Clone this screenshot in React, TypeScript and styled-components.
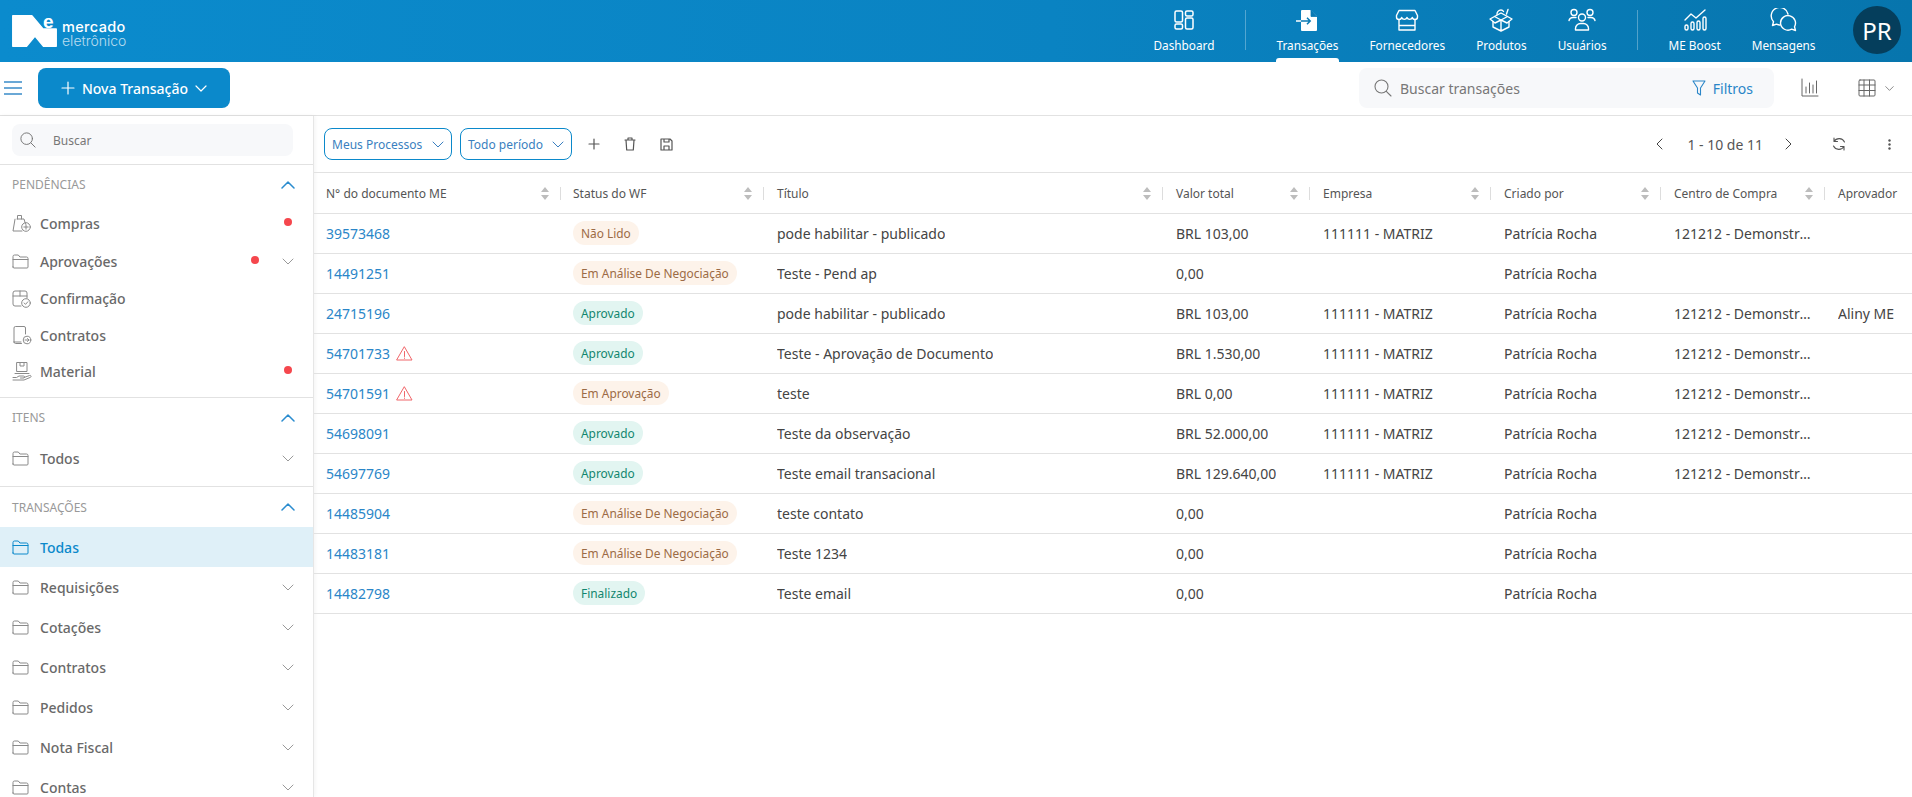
import React from "react";
import styled, { createGlobalStyle } from "styled-components";

const Global = createGlobalStyle`
  html, body { margin: 0; padding: 0; height: 100%; overflow: hidden; background: #fff; }
  body { font-family: "Noto Sans", "Open Sans", sans-serif; color: #444; }
  * { box-sizing: border-box; }
`;

const Page = styled.div`display:flex;flex-direction:column;height:797px;width:1912px;overflow:hidden;`;

/* Header */
const Header = styled.header`
  height:62px;flex:none;display:flex;justify-content:space-between;align-items:stretch;
  background:linear-gradient(90deg,#0b8bcd 0%,#0a83c2 55%,#0775ad 100%);color:#fff;
`;
const Logo = styled.div`display:flex;align-items:center;padding-left:12px;gap:5px;`;
const LogoMark = styled.div`position:relative;width:45px;height:32px;display:flex;`;
const LogoE = styled.span`
  position:absolute;left:31px;top:-3px;font-family:"Liberation Sans",sans-serif;font-size:19px;font-weight:700;line-height:19px;color:#fff;
`;
const LogoText = styled.div`display:flex;flex-direction:column;margin-top:4px;`;
const LogoTop = styled.span`font-family:"Inter",sans-serif;font-size:14.500px;font-weight:500;line-height:15px;letter-spacing:.35px;`;
const LogoBottom = styled.span`font-family:"Inter",sans-serif;font-size:14px;font-weight:300;line-height:13px;opacity:.7;`;
const Nav = styled.nav`display:flex;align-items:stretch;padding-right:11px;`;
const NavItem = styled.div<{ $active?: boolean }>`
  position:relative;display:flex;flex-direction:column;align-items:center;padding:0 15.500px;font-size:11.800px;line-height:16px;
  &::after{content:"";display:${(p) => (p.$active ? "block" : "none")};position:absolute;left:15px;right:15px;bottom:0;height:4px;background:#fff;border-radius:3px 3px 0 0;}
`;
const NavIconBox = styled.div`height:24px;margin-top:8px;margin-bottom:5px;display:flex;align-items:center;justify-content:center;`;
const NavDivider = styled.div`width:1px;height:40px;margin:10px 15px 0;background:rgba(255,255,255,.3);`;
const Avatar = styled.div`width:48px;height:48px;border-radius:50%;background:#053e5c;color:#fff;font-size:24px;display:flex;align-items:center;justify-content:center;margin:6px 0 0 22px;`;

/* Toolbar */
const Toolbar = styled.div`height:54px;flex:none;display:flex;align-items:center;border-bottom:1px solid #e2e2e2;padding:0 18px 1px 4px;background:#fff;`;
const Burger = styled.div`color:#3a8cc9;display:flex;`;
const NewButton = styled.button`
  margin-left:16px;width:192px;height:40px;border:0;border-radius:8px;background:#0b89cb;color:#fff;display:flex;align-items:center;justify-content:center;gap:7px;
  font-family:inherit;font-size:14px;font-weight:500;
`;
const Spacer = styled.div`flex:1;`;
const SearchBox = styled.div`width:415px;height:40px;border-radius:8px;background:#f7f8fa;display:flex;align-items:center;padding:0 21px 0 15px;gap:8px;color:#777;font-size:14px;`;
const SearchHint = styled.span`flex:1;`;
const FilterLink = styled.span`display:flex;align-items:center;gap:7px;color:#2a86c8;font-weight:400;`;
const ToolIcon = styled.div<{ $ml: number }>`display:flex;align-items:center;color:#666;margin-left:${(p) => p.$ml}px;`;

/* Main */
const Main = styled.div`flex:1;display:flex;min-height:0;`;
const Sidebar = styled.aside`width:314px;flex:none;border-right:1px solid #e6e6e6;box-shadow:1px 0 4px rgba(0,0,0,.05);overflow:hidden;background:#fff;`;
const SideSearchWrap = styled.div`padding:8px 20px 8px 12px;height:49px;border-bottom:1px solid #e2e2e2;`;
const SideSearch = styled.div`height:32px;border-radius:8px;background:#f7f8fa;display:flex;align-items:center;padding-left:8px;gap:17px;color:#777;font-size:12px;`;
const Section = styled.section<{ $last?: boolean; $pb?: number }>`border-bottom:${(p) => (p.$last ? "0" : "1px solid #e2e2e2")};padding-bottom:${(p) => p.$pb ?? 0}px;`;
const SectionHead = styled.div<{ $h?: number }>`height:${(p) => p.$h ?? 39}px;display:flex;align-items:center;justify-content:space-between;padding:0 18px 0 12px;font-size:12px;color:#999;`;
const SectionChev = styled.span`color:#2a8ccf;display:flex;`;
const SideItem = styled.div<{ $h: number; $active?: boolean }>`
  height:${(p) => p.$h}px;display:flex;align-items:center;padding:0 19px 0 12px;font-size:14px;font-weight:500;
  color:${(p) => (p.$active ? "#0b89cb" : "#696969")};background:${(p) => (p.$active ? "#dff0f8" : "transparent")};
`;
const SideIcon = styled.span<{ $active?: boolean }>`width:28px;flex:none;display:flex;align-items:center;color:${(p) => (p.$active ? "#0b89cb" : "#8a8a8a")};`;
const SideLabel = styled.span`flex:1;`;
const Dot = styled.i<{ $mr?: number }>`width:8px;height:8px;border-radius:50%;background:#f5474d;display:block;margin-top:-2px;margin-right:${(p) => p.$mr ?? 2}px;`;
const ChevSlot = styled.span`color:#999;display:flex;`;

/* Content */
const Content = styled.main`flex:1;min-width:0;display:flex;flex-direction:column;`;
const FilterBar = styled.div`height:57px;flex:none;display:flex;align-items:center;padding:0 5px 0 10px;border-bottom:1px solid #e2e2e2;`;
const Pill = styled.div<{ $w: number }>`
  width:${(p) => p.$w}px;height:32px;margin-right:8px;border:1px solid #0b89cb;border-radius:8px;display:flex;align-items:center;justify-content:space-between;padding:0 7px 0 7px;font-size:12px;color:#3a7fc0;
`;
const BarIcon = styled.span<{ $ml?: number }>`width:36px;display:flex;justify-content:center;color:#555;margin-left:${(p) => p.$ml ?? 0}px;`;
const Pager = styled.span`font-size:14px;color:#555;margin:0 22px 0 24px;`;
const Grid = "246px 203px 399px 147px 181px 170px 164px 88px";
const HeadRow = styled.div`height:41px;flex:none;display:grid;grid-template-columns:${Grid};border-bottom:1px solid #e2e2e2;`;
const HeadCell = styled.div`display:flex;align-items:center;font-size:12px;color:#555;padding-right:11px;min-width:0;`;
const Sep = styled.i<{ $mr: number }>`width:1px;height:13px;background:#ddd;margin-right:${(p) => p.$mr}px;flex:none;`;
const FirstPad = styled.i`width:12px;flex:none;`;
const HeadLabel = styled.span`flex:1;white-space:nowrap;`;
const Row = styled.div`height:40px;flex:none;display:grid;grid-template-columns:${Grid};border-bottom:1px solid #e2e2e2;`;
const Cell = styled.div<{ $pl?: number }>`
  display:flex;align-items:center;padding:0 12px 0 ${(p) => p.$pl ?? 14}px;font-size:14px;color:#444;min-width:0;white-space:nowrap;
`;
const Clip = styled.span`overflow:hidden;text-overflow:ellipsis;white-space:nowrap;`;
const DocLink = styled.a`color:#2a86c8;text-decoration:none;`;
const Warn = styled.span`display:flex;margin-left:6px;color:#f0666a;`;
const Badge = styled.span<{ $tone: "orange" | "green" }>`
  height:24px;border-radius:12px;padding:0 8px;display:inline-flex;align-items:center;font-size:11.900px;margin-top:-1px;
  background:${(p) => (p.$tone === "orange" ? "#fdf3ea" : "#e2f5f1")};color:${(p) => (p.$tone === "orange" ? "#9c6b45" : "#11866e")};
`;

/* Icons */
type SP = { children: React.ReactNode; w?: number; h?: number; vb?: string; sw?: number };
const I = ({ children, w = 20, h = 20, vb, sw = 1.3 }: SP) => (
  <svg width={w} height={h} viewBox={vb ?? `0 0 ${w} ${h}`} fill="none" stroke="currentColor" strokeWidth={sw} strokeLinecap="round" strokeLinejoin="round">{children}</svg>
);
const ChevDown = ({ w = 12 }: { w?: number }) => <I w={w} h={7} vb="0 0 12 7" sw={1}><path d="M1 1l5 5 5-5" /></I>;
const ChevUp = () => <I w={14} h={8} vb="0 0 14 8" sw={1.5}><path d="M1 7l6-6 6 6" /></I>;
const Folder = () => <I w={17} h={15} vb="0 0 17 15" sw={1}><path d="M1 13V2.500A1.500 1.500 0 012.500 1h3.800l1.600 2h6.600A1.500 1.500 0 0116 4.500v8.500a1 1 0 01-1 1H2a1 1 0 01-1-1zM1 5.500h15" /></I>;
const Search = ({ s = 18 }: { s?: number }) => <I w={s} h={s} vb="0 0 18 18" sw={1.1}><circle cx="7.500" cy="7.500" r="6.500" /><path d="M12.300 12.300L17 17" /></I>;
const Bag = () => <I w={20} h={20} sw={1}><path d="M5 6h7l1.500 5M3 6.200L1 18h9M5.500 6V2.500h4V6" /><circle cx="14" cy="14" r="4.300" /><path d="M14 11.800v4.400M11.800 14h4.400" /></I>;
const Confirm = () => <I w={20} h={20} sw={1}><path d="M9 17H3a2 2 0 01-2-2V4a2 2 0 012-2h10a2 2 0 012 2v5M1 7h14M8 2v5" /><circle cx="14" cy="14" r="4.300" /><path d="M12.200 14l1.300 1.400 2.300-2.600" /></I>;
const Contract = () => <I w={20} h={20} sw={1}><path d="M2 17V3a1.500 1.500 0 011.500-1.500H12A1.500 1.500 0 0113.500 3v6M2 17a1.500 1.500 0 001.500 1.500H9.500M2 17h7" /><circle cx="15" cy="15" r="3.800" /><path d="M13 15h4M15.500 13.500L17 15l-1.500 1.500" /></I>;
const Material = () => <I w={20} h={20} sw={1}><path d="M5 1.500h10v9H5zM8 1.500v3.500h4V1.500M3 12.500h14" /><path d="M1 16.500h3.500l2.500-1.500h4.500a1 1 0 010 2H8.500M12 16.500l5.500-2a1 1 0 011 1.800L12 19H1" /></I>;
const Warning = () => <I w={17} h={15} vb="0 0 17 15" sw={1}><path d="M8.500 1L16 14H1zM8.500 5.500v5M8.500 12v.4" /></I>;
const Sort = () => <svg width="8" height="13" viewBox="0 0 8 13" fill="#bdbdbd"><path d="M4 0l4 5H0zM4 13L0 8h8z" /></svg>;

const NavIcons = {
  dash: <I w={20} h={20} sw={1.5}><rect x="1" y="1" width="7.500" height="11" rx="1.500" /><rect x="1" y="14" width="7.500" height="5" rx="1.500" /><rect x="11.500" y="1" width="7.500" height="5" rx="1.500" /><rect x="11.500" y="8" width="7.500" height="11" rx="1.500" /></I>,
  trans: <svg width="24" height="24" viewBox="0 0 24 24"><path d="M6 3a1 1 0 011-1h8.500L22 8.500V22a1 1 0 01-1 1H7a1 1 0 01-1-1z" fill="#fff" /><path d="M16 2v6.500h6" fill="#0a7ab4" stroke="#0a7ab4" strokeWidth=".8" /><path d="M1 13h5" stroke="#fff" strokeWidth="1.500" /><path d="M6 13h9M12 9.800l3.200 3.200-3.200 3.200" stroke="#0a7ab4" strokeWidth="1.500" fill="none" /></svg>,
  store: <I w={24} h={24} sw={1.4}><path d="M4 2.500h16l2.500 5v1.500a2.500 2.500 0 01-2.500 2.500 2.700 2.700 0 01-2.700-2 2.800 2.800 0 01-5.300 0 2.800 2.800 0 01-5.300 0 2.700 2.700 0 01-2.700 2A2.500 2.500 0 011.500 9V7.500z" /><path d="M4 12v10h16V12M4 17.500h16" /></I>,
  box: <I w={26} h={24} sw={1.4}><path d="M6.500 8.500L13 5l6.500 3.500L13 12zM6.500 8.500L2 11l5 4 6-3 6 3 5-4-4.500-2.500" /><path d="M5 13.500V19l8 4 8-4v-5.500M13 12v11" /><path d="M9 6.500A4 4 0 0113 2a3 3 0 012.500 1.500M18.500 6L20 1.500" /></I>,
  users: <I w={28} h={24} sw={1.4}><circle cx="14" cy="9.500" r="3.500" /><path d="M7.500 22v-1.500a5 5 0 015-5h3a5 5 0 015 5V22z" /><circle cx="6" cy="4.500" r="3" /><circle cx="22" cy="4.500" r="3" /><path d="M1 12.500c.5-2 2-3 4-3h3M27 12.500c-.5-2-2-3-4-3h-3" /></I>,
  boost: <I w={24} h={22} sw={1.4}><path d="M2 11l6-6 5 4 9-8" /><rect x="2" y="16" width="3" height="5" rx="1.500" /><rect x="8" y="13" width="3" height="8" rx="1.500" /><rect x="14" y="12" width="3" height="9" rx="1.500" /><rect x="20" y="8" width="3" height="13" rx="1.500" /></I>,
  msg: <I w={28} h={24} sw={1.4}><path d="M10 17a9 9 0 01-3.500-.9L2.500 17.500l1-3.800A8.500 8.500 0 1118 6" /><path d="M10.500 15a7.500 7.500 0 1114 3.800l1 3.700-3.800-1.300A7.500 7.500 0 0110.500 15z" /></I>,
};

const navA = [{ k: "dash", t: "Dashboard" }];
const navB = [{ k: "trans", t: "Transações", a: true }, { k: "store", t: "Fornecedores" }, { k: "box", t: "Produtos" }, { k: "users", t: "Usuários" }];
const navC = [{ k: "boost", t: "ME Boost" }, { k: "msg", t: "Mensagens" }];
type N = { k: string; t: string; a?: boolean };
const NavGroup = ({ items }: { items: N[] }) => (
  <>
    {items.map((n) => (
      <NavItem key={n.t} $active={n.a}>
        <NavIconBox>{NavIcons[n.k as keyof typeof NavIcons]}</NavIconBox>
        {n.t}
      </NavItem>
    ))}
  </>
);

const columns = ["N° do documento ME", "Status do WF", "Título", "Valor total", "Empresa", "Criado por", "Centro de Compra", "Aprovador"];
const M = "111111 - MATRIZ";
const P = "Patrícia Rocha";
const C = "121212 - Demonstração";
type R = { id: string; warn?: boolean; st: string; tone: "orange" | "green"; title: string; val: string; emp?: string; cc?: string; ap?: string };
const rows: R[] = [
  { id: "39573468", st: "Não Lido", tone: "orange", title: "pode habilitar - publicado", val: "BRL 103,00", emp: M, cc: C },
  { id: "14491251", st: "Em Análise De Negociação", tone: "orange", title: "Teste - Pend ap", val: "0,00" },
  { id: "24715196", st: "Aprovado", tone: "green", title: "pode habilitar - publicado", val: "BRL 103,00", emp: M, cc: C, ap: "Aliny ME" },
  { id: "54701733", warn: true, st: "Aprovado", tone: "green", title: "Teste - Aprovação de Documento", val: "BRL 1.530,00", emp: M, cc: C },
  { id: "54701591", warn: true, st: "Em Aprovação", tone: "orange", title: "teste", val: "BRL 0,00", emp: M, cc: C },
  { id: "54698091", st: "Aprovado", tone: "green", title: "Teste da observação", val: "BRL 52.000,00", emp: M, cc: C },
  { id: "54697769", st: "Aprovado", tone: "green", title: "Teste email transacional", val: "BRL 129.640,00", emp: M, cc: C },
  { id: "14485904", st: "Em Análise De Negociação", tone: "orange", title: "teste contato", val: "0,00" },
  { id: "14483181", st: "Em Análise De Negociação", tone: "orange", title: "Teste 1234", val: "0,00" },
  { id: "14482798", st: "Finalizado", tone: "green", title: "Teste email", val: "0,00" },
];

const SideRow = ({ h, icon, label, dot, chev, active, dotMr }: { h: number; icon: React.ReactNode; label: string; dot?: boolean; chev?: boolean; active?: boolean; dotMr?: number }) => (
  <SideItem $h={h} $active={active}>
    <SideIcon $active={active}>{icon}</SideIcon>
    <SideLabel>{label}</SideLabel>
    {dot && <Dot $mr={dotMr} />}
    {chev && <ChevSlot><ChevDown /></ChevSlot>}
  </SideItem>
);

export default function App() {
  return (
    <Page>
      <Global />
      <Header>
        <Logo>
          <LogoMark>
            <svg width="45" height="32" viewBox="0 0 45 32" fill="#fff" stroke="#fff" strokeWidth="1.500" strokeLinejoin="round"><path d="M.8 .8h19L31 14h13.200v17.200H31.500L23 21l-8.500 10.200H.8z" /></svg>
            <LogoE>e</LogoE>
          </LogoMark>
          <LogoText>
            <LogoTop>mercado</LogoTop>
            <LogoBottom>eletrônico</LogoBottom>
          </LogoText>
        </Logo>
        <Nav>
          <NavGroup items={navA} />
          <NavDivider />
          <NavGroup items={navB} />
          <NavDivider />
          <NavGroup items={navC} />
          <Avatar>PR</Avatar>
        </Nav>
      </Header>

      <Toolbar>
        <Burger><I w={18} h={16} sw={1.500}><path d="M0 2h18M0 8h18M0 14h18" /></I></Burger>
        <NewButton>
          <I w={14} h={14} sw={1.200}><path d="M7 1v12M1 7h12" /></I>
          Nova Transação
          <I w={12} h={7} vb="0 0 12 7" sw={1.200}><path d="M1 1l5 5 5-5" /></I>
        </NewButton>
        <Spacer />
        <SearchBox>
          <Search />
          <SearchHint>Buscar transações</SearchHint>
          <FilterLink>
            <I w={14} h={16} vb="0 0 14 16" sw={1.100}><path d="M1 1h12L8.500 8v7l-3-2V8z" /></I>
            Filtros
          </FilterLink>
        </SearchBox>
        <ToolIcon $ml={27}>
          <I w={18} h={20} sw={1}><path d="M1 1v17h16M5 15V9M8.500 15V5M12 15V7M15.500 15V3" /></I>
        </ToolIcon>
        <ToolIcon $ml={39}>
          <I w={18} h={18} sw={1}><rect x="1" y="1" width="16" height="16" rx="1" /><path d="M1 6h16M1 11.500h16M6 1v16M11.500 1v16" /></I>
        </ToolIcon>
        <ToolIcon $ml={9}><ChevDown w={9} /></ToolIcon>
      </Toolbar>

      <Main>
        <Sidebar>
          <SideSearchWrap>
            <SideSearch><Search s={16} />Buscar</SideSearch>
          </SideSearchWrap>
          <Section $pb={8}>
            <SectionHead>PENDÊNCIAS<SectionChev><ChevUp /></SectionChev></SectionHead>
            <SideRow h={38} icon={<Bag />} label="Compras" dot />
            <SideRow h={38} icon={<Folder />} label="Aprovações" dot dotMr={23} chev />
            <SideRow h={37} icon={<Confirm />} label="Confirmação" />
            <SideRow h={36} icon={<Contract />} label="Contratos" />
            <SideRow h={36} icon={<Material />} label="Material" dot />
          </Section>
          <Section $pb={7}>
            <SectionHead>ITENS<SectionChev><ChevUp /></SectionChev></SectionHead>
            <SideRow h={42} icon={<Folder />} label="Todos" chev />
          </Section>
          <Section $last>
            <SectionHead $h={40}>TRANSAÇÕES<SectionChev><ChevUp /></SectionChev></SectionHead>
            <SideRow h={40} icon={<Folder />} label="Todas" active />
            {["Requisições", "Cotações", "Contratos", "Pedidos", "Nota Fiscal", "Contas"].map((l) => (
              <SideRow key={l} h={40} icon={<Folder />} label={l} chev />
            ))}
          </Section>
        </Sidebar>

        <Content>
          <FilterBar>
            <Pill $w={128}>Meus Processos<ChevDown /></Pill>
            <Pill $w={112}>Todo período<ChevDown /></Pill>
            <BarIcon $ml={-4}><I w={12} h={12} sw={1.200}><path d="M6 1v10M1 6h10" /></I></BarIcon>
            <BarIcon><I w={12} h={14} sw={1.200}><path d="M1 3h10M4 3V1h4v2M2 3l.7 10h6.600L10 3" /></I></BarIcon>
            <BarIcon><I w={13} h={13} sw={1.200}><path d="M1 1h9l2 2v9H1zM4 1v3h5V1M4 12V8h5v4" /></I></BarIcon>
            <Spacer />
            <I w={8} h={12} sw={1}><path d="M7 1L2 6l5 5" /></I>
            <Pager>1 - 10 de 11</Pager>
            <I w={8} h={12} sw={1}><path d="M1 1l5 5-5 5" /></I>
            <BarIcon $ml={28}><I w={14} h={14} sw={1.100}><path d="M12.500 5A6 6 0 002 4.500M1.500 9A6 6 0 0012 9.500M2 1v3.500h3.500M12 13V9.500H8.500" /></I></BarIcon>
            <BarIcon $ml={14}><svg width="3" height="11" viewBox="0 0 3 11" fill="#555"><circle cx="1.500" cy="1.500" r="1.200" /><circle cx="1.500" cy="5.500" r="1.200" /><circle cx="1.500" cy="9.500" r="1.200" /></svg></BarIcon>
          </FilterBar>
          <HeadRow>
            {columns.map((c, i) => (
              <HeadCell key={c}>
                {i === 0 ? <FirstPad /> : <Sep $mr={i === 1 ? 12 : 13} />}
                <HeadLabel>{c}</HeadLabel>
                {i < 7 && <Sort />}
              </HeadCell>
            ))}
          </HeadRow>
          {rows.map((r) => (
            <Row key={r.id}>
              <Cell $pl={12}>
                <DocLink>{r.id}</DocLink>
                {r.warn && <Warn><Warning /></Warn>}
              </Cell>
              <Cell $pl={13}><Badge $tone={r.tone}>{r.st}</Badge></Cell>
              <Cell><Clip>{r.title}</Clip></Cell>
              <Cell><Clip>{r.val}</Clip></Cell>
              <Cell><Clip>{r.emp}</Clip></Cell>
              <Cell><Clip>{P}</Clip></Cell>
              <Cell><Clip>{r.cc}</Clip></Cell>
              <Cell><Clip>{r.ap}</Clip></Cell>
            </Row>
          ))}
        </Content>
      </Main>
    </Page>
  );
}
